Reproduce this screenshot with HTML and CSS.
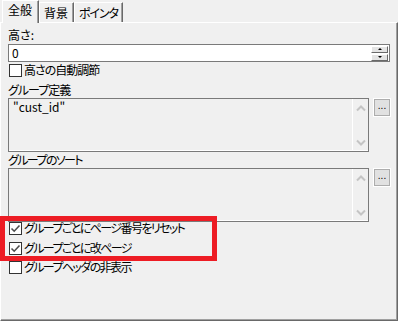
FILE: index.html
```html
<!DOCTYPE html>
<html lang="ja">
<head>
<meta charset="utf-8">
<link rel="stylesheet" href="styles.css">
</head>
<body>
<div class="win">
  <div class="tabs">
    <div class="tab sel">全般</div>
    <div class="tab">背景</div>
    <div class="tab kana">ポインタ</div>
  </div>
  <div class="panel">
    <div class="label">高さ:</div>
    <div class="spin-input">
      <div class="value">0</div>
      <div class="spin">
        <div class="sbtn"><span class="up"></span></div>
        <div class="sbtn"><span class="down"></span></div>
      </div>
    </div>
    <div class="check first"><span class="box"></span><span class="ctext mid">高さの自動調節</span></div>
    <div class="label l2 mid">グループ定義</div>
    <div class="arow">
      <div class="area">
        <div class="atext">"cust_id"</div>
        <div class="scroll">
          <svg width="10" height="7" viewBox="0 0 10 7"><path d="M1 5.5 L5 1.5 L9 5.5" fill="none" stroke="#c4c4c4" stroke-width="2"/></svg>
          <svg width="10" height="7" viewBox="0 0 10 7"><path d="M1 1.5 L5 5.5 L9 1.5" fill="none" stroke="#c4c4c4" stroke-width="2"/></svg>
        </div>
      </div>
      <div class="dots">...</div>
    </div>
    <div class="label kana">グループのソート</div>
    <div class="arow">
      <div class="area">
        <div class="atext"></div>
        <div class="scroll">
          <svg width="10" height="7" viewBox="0 0 10 7"><path d="M1 5.5 L5 1.5 L9 5.5" fill="none" stroke="#c4c4c4" stroke-width="2"/></svg>
          <svg width="10" height="7" viewBox="0 0 10 7"><path d="M1 1.5 L5 5.5 L9 1.5" fill="none" stroke="#c4c4c4" stroke-width="2"/></svg>
        </div>
      </div>
      <div class="dots">...</div>
    </div>
    <div class="check row"><span class="box on"><svg width="11" height="11" viewBox="0 0 11 11"><path d="M1.5 5.5 L4.2 8.2 L9.5 2.5" fill="none" stroke="#4d4d4d" stroke-width="1.6"/></svg></span><span class="ctext kana">グループごとにページ番号をリセット</span></div>
    <div class="check row"><span class="box on"><svg width="11" height="11" viewBox="0 0 11 11"><path d="M1.5 5.5 L4.2 8.2 L9.5 2.5" fill="none" stroke="#4d4d4d" stroke-width="1.6"/></svg></span><span class="ctext kana">グループごとに改ページ</span></div>
    <div class="check row"><span class="box"></span><span class="ctext kana">グループヘッダの非表示</span></div>
  </div>
  <div class="mark"></div>
</div>
</body>
</html>
```
FILE: styles.css
```css
html, body {
  margin: 0;
  padding: 0;
  background: #f0f0f0;
}
body {
  width: 398px;
  height: 321px;
  overflow: hidden;
  font-family: "Noto Sans CJK JP", "Liberation Sans", sans-serif;
  font-size: 12px;
  line-height: 16px;
  color: #000;
  font-feature-settings: "palt";
}
.kana {
  letter-spacing: -1.6px;
}
.mid {
  letter-spacing: -1px;
}
.win {
  position: relative;
  width: 398px;
  height: 321px;
  display: flex;
  flex-direction: column;
}
.tabs {
  display: flex;
  align-items: flex-end;
  height: 22px;
  padding-left: 2px;
  box-sizing: border-box;
}
.tab {
  height: 20px;
  box-sizing: border-box;
  padding: 2px 5px 0 4px;
  border-top: 1px solid #fff;
  border-left: 1px solid #fff;
  border-right: 1px solid #696969;
  box-shadow: inset -1px 0 0 #a0a0a0;
  background: #f0f0f0;
  white-space: nowrap;
}
.tab.kana {
  letter-spacing: -1.1px;
  padding-right: 4px;
}
.tab.sel {
  height: 23px;
  margin-bottom: -1px;
  padding: 1px 6px 0 5px;
  position: relative;
  z-index: 2;
}
.panel {
  flex: 1;
  box-sizing: border-box;
  border-top: 1px solid #fff;
  border-left: 1px solid #fff;
  border-right: 1px solid #696969;
  border-bottom: 1px solid #696969;
  box-shadow: inset -1px -1px 0 #a0a0a0;
  padding: 4px 7px 0 7px;
  display: flex;
  flex-direction: column;
}
.label {
  height: 16px;
  flex: none;
}
.label.l2 {
  margin-top: 1px;
}
.spin-input {
  margin-top: 1px;
  height: 18px;
  box-sizing: border-box;
  border: 1px solid #7a7a7a;
  background: #fff;
  display: flex;
  align-items: center;
  flex: none;
  width: 382px;
}
.value {
  flex: 1;
  padding-left: 3px;
}
.spin {
  width: 17px;
  display: flex;
  flex-direction: column;
  gap: 1px;
  margin-right: 1px;
}
.sbtn {
  height: 7px;
  box-sizing: border-box;
  background: #e3e3e3;
  border-top: 1px solid #fff;
  border-left: 1px solid #fff;
  border-right: 1px solid #696969;
  border-bottom: 1px solid #696969;
  display: flex;
  align-items: center;
  justify-content: center;
}
.up {
  width: 0;
  height: 0;
  border-left: 2px solid transparent;
  border-right: 2px solid transparent;
  border-bottom: 2px solid #000;
}
.down {
  width: 0;
  height: 0;
  border-left: 2px solid transparent;
  border-right: 2px solid transparent;
  border-top: 2px solid #000;
}
.check {
  display: flex;
  align-items: flex-start;
  flex: none;
}
.check.first {
  height: 17px;
  margin-top: 2px;
}
.check.row {
  height: 19.5px;
}
.box {
  width: 13px;
  height: 13px;
  box-sizing: border-box;
  border: 1px solid #333;
  background: #fff;
  margin-left: 1px;
  margin-right: 2px;
  display: flex;
  align-items: center;
  justify-content: center;
  flex: none;
}
.ctext {
  margin-top: -2px;
  white-space: nowrap;
}
.arow {
  display: flex;
  gap: 5px;
  flex: none;
  height: 54px;
  align-items: flex-start;
}
.area {
  width: 362px;
  height: 54px;
  box-sizing: border-box;
  border: 1px solid #7a7a7a;
  background: #f0f0f0;
  display: flex;
  box-shadow: inset 0 -1px 0 #fff;
}
.atext {
  flex: 1;
  padding: 0 0 0 4px;
}
.scroll {
  width: 16px;
  border-left: 1px solid #fff;
  display: flex;
  flex-direction: column;
  justify-content: space-between;
  align-items: center;
  padding: 6px 0 5px;
  box-sizing: border-box;
}
.dots {
  width: 16px;
  height: 17px;
  box-sizing: border-box;
  border: 1px solid #adadad;
  outline: 1px solid #fff;
  background: #e1e1e1;
  font-size: 10px;
  line-height: 12px;
  text-align: center;
  font-family: "Liberation Sans", sans-serif;
  margin-top: 1px;
}
.panel .arow:last-of-type + .check {
  margin-top: 1px;
}
.mark {
  position: absolute;
  left: 0;
  top: 216px;
  width: 217px;
  height: 45px;
  box-sizing: border-box;
  border: 5px solid #ed1c24;
  pointer-events: none;
}
```
